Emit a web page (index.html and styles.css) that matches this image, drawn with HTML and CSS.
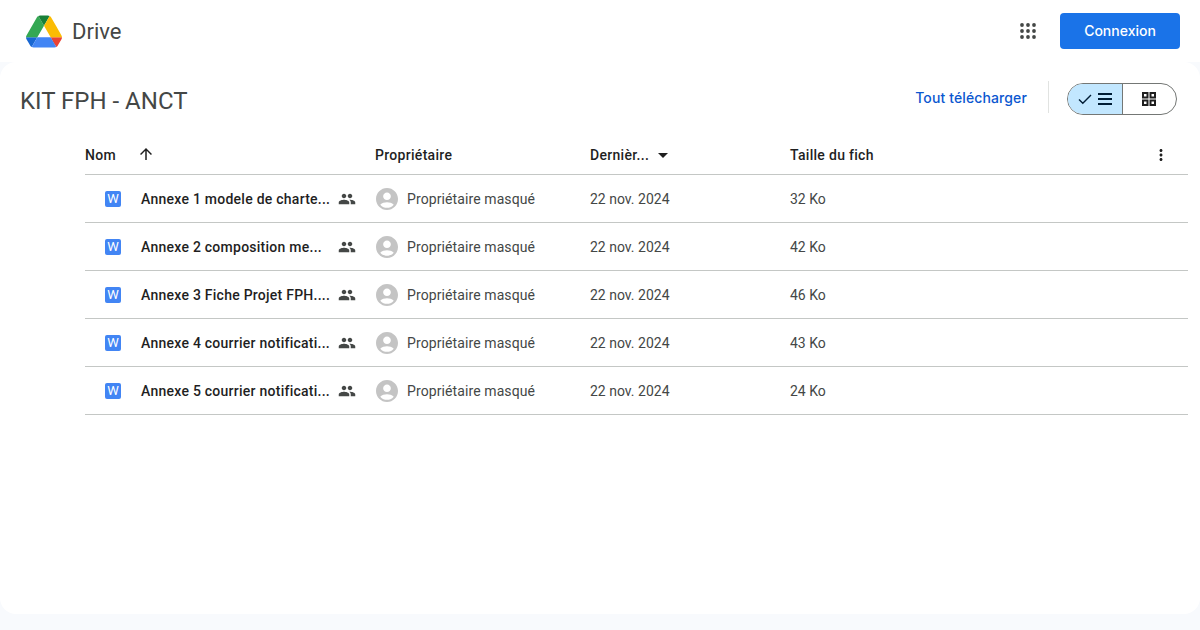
FILE: index.html
```html
<!DOCTYPE html>
<html lang="fr">
<head>
    <meta charset="UTF-8">
    <title>KIT FPH - ANCT - Google Drive</title>
    <link rel="stylesheet" href="styles.css">
</head>
<body>
    <header class="topbar">
        <div class="brand">
            <svg class="drive-logo" viewBox="0 0 87.3 78" aria-hidden="true">
                <path d="m6.6 66.85 3.85 6.65c.8 1.4 1.95 2.5 3.3 3.3l13.75-23.8h-27.5c0 1.55.4 3.1 1.2 4.5z" fill="#1967d2"/>
                <path d="m43.65 25-13.75-23.8c-1.35.8-2.5 1.9-3.3 3.3l-25.4 44a9.06 9.06 0 0 0 -1.2 4.5h27.5z" fill="#34a853"/>
                <path d="m73.55 76.8c1.35-.8 2.5-1.9 3.3-3.3l1.6-2.75 7.65-13.25c.8-1.4 1.2-2.95 1.2-4.5h-27.502l5.852 11.5z" fill="#ea4335"/>
                <path d="m43.65 25 13.75-23.8c-1.35-.8-2.9-1.2-4.5-1.2h-18.5c-1.6 0-3.15.45-4.5 1.2z" fill="#188038"/>
                <path d="m59.8 53h-32.3l-13.75 23.8c1.35.8 2.9 1.2 4.5 1.2h50.8c1.6 0 3.15-.45 4.5-1.2z" fill="#4285f4"/>
                <path d="m73.4 26.5-12.7-22c-.8-1.4-1.95-2.5-3.3-3.3l-13.75 23.8 16.15 28h27.45c0-1.55-.4-3.1-1.2-4.5z" fill="#fbbc04"/>
            </svg>
            <span class="brand-name">Drive</span>
        </div>
        <div class="topbar-actions">
            <svg class="apps-icon" viewBox="0 0 16 16" aria-hidden="true">
                <circle cx="2" cy="2" r="1.9"/><circle cx="8" cy="2" r="1.9"/><circle cx="14" cy="2" r="1.9"/>
                <circle cx="2" cy="8" r="1.9"/><circle cx="8" cy="8" r="1.9"/><circle cx="14" cy="8" r="1.9"/>
                <circle cx="2" cy="14" r="1.9"/><circle cx="8" cy="14" r="1.9"/><circle cx="14" cy="14" r="1.9"/>
            </svg>
            <button class="login">Connexion</button>
        </div>
    </header>

    <main class="card">
        <div class="toolbar">
            <h1>KIT FPH - ANCT</h1>
            <div class="toolbar-actions">
                <a class="download" href="#">Tout télécharger</a>
                <span class="separator"></span>
                <div class="view-toggle">
                    <span class="view-option selected">
                        <svg class="check-icon" viewBox="0 0 14 12" aria-hidden="true"><path d="M1 6.5l3.8 3.8L13 2"/></svg>
                        <svg class="list-icon" viewBox="0 0 14 12" aria-hidden="true"><rect y="0" width="14" height="2"/><rect y="5" width="14" height="2"/><rect y="10" width="14" height="2"/></svg>
                    </span>
                    <span class="view-option">
                        <svg class="grid-icon" viewBox="0 0 14 14" aria-hidden="true"><rect x="1" y="1" width="4.5" height="4.5"/><rect x="8.5" y="1" width="4.5" height="4.5"/><rect x="1" y="8.5" width="4.5" height="4.5"/><rect x="8.5" y="8.5" width="4.5" height="4.5"/></svg>
                    </span>
                </div>
            </div>
        </div>

        <div class="file-table">
            <div class="row head">
                <div class="col-name">
                    <span>Nom</span>
                    <svg class="arrow-icon" viewBox="0 0 24 24" aria-hidden="true"><path d="M4 12l1.41 1.41L11 7.83V20h2V7.83l5.58 5.59L20 12l-8-8-8 8z"/></svg>
                </div>
                <div>Propriétaire</div>
                <div class="col-date">
                    <span>Dernièr...</span>
                    <svg class="caret-icon" viewBox="0 0 24 24" aria-hidden="true"><path d="M7 10l5 5 5-5z"/></svg>
                </div>
                <div class="col-size">
                    <span>Taille du fich</span>
                    <svg class="more-icon" viewBox="0 0 24 24" aria-hidden="true"><path d="M12 8c1.1 0 2-.9 2-2s-.9-2-2-2-2 .9-2 2 .9 2 2 2zm0 2c-1.1 0-2 .9-2 2s.9 2 2 2 2-.9 2-2-.9-2-2-2zm0 6c-1.1 0-2 .9-2 2s.9 2 2 2 2-.9 2-2-.9-2-2-2z"/></svg>
                </div>
            </div>

            <div class="row file">
                <div class="file-name">
                    <span class="word-icon">W</span>
                    <span class="title">Annexe 1 modele de charte...</span>
                    <svg class="people-icon" viewBox="0 0 24 24" aria-hidden="true"><path d="M16 11c1.66 0 2.99-1.34 2.99-3S17.66 5 16 5c-1.66 0-3 1.34-3 3s1.34 3 3 3zm-8 0c1.66 0 2.99-1.34 2.99-3S9.66 5 8 5C6.34 5 5 6.34 5 8s1.34 3 3 3zm0 2c-2.33 0-7 1.17-7 3.5V19h14v-2.5c0-2.33-4.67-3.5-7-3.5zm8 0c-.29 0-.62.02-.97.05 1.16.84 1.97 1.97 1.97 3.45V19h6v-2.5c0-2.33-4.67-3.5-7-3.5z"/></svg>
                </div>
                <div class="owner">
                    <svg class="avatar" viewBox="2 2 20 20" aria-hidden="true"><path d="M12 2C6.48 2 2 6.48 2 12s4.48 10 10 10 10-4.48 10-10S17.52 2 12 2zm0 4c1.93 0 3.5 1.57 3.5 3.5S13.93 13 12 13s-3.5-1.57-3.5-3.5S10.07 6 12 6zm0 14c-2.03 0-4.43-.82-6.14-2.88C7.55 15.8 9.68 15 12 15s4.45.8 6.14 2.12C16.43 19.18 14.03 20 12 20z"/></svg>
                    <span>Propriétaire masqué</span>
                </div>
                <div>22 nov. 2024</div>
                <div>32 Ko</div>
            </div>

            <div class="row file">
                <div class="file-name">
                    <span class="word-icon">W</span>
                    <span class="title">Annexe 2 composition me...</span>
                    <svg class="people-icon" viewBox="0 0 24 24" aria-hidden="true"><path d="M16 11c1.66 0 2.99-1.34 2.99-3S17.66 5 16 5c-1.66 0-3 1.34-3 3s1.34 3 3 3zm-8 0c1.66 0 2.99-1.34 2.99-3S9.66 5 8 5C6.34 5 5 6.34 5 8s1.34 3 3 3zm0 2c-2.33 0-7 1.17-7 3.5V19h14v-2.5c0-2.33-4.67-3.5-7-3.5zm8 0c-.29 0-.62.02-.97.05 1.16.84 1.97 1.97 1.97 3.45V19h6v-2.5c0-2.33-4.67-3.5-7-3.5z"/></svg>
                </div>
                <div class="owner">
                    <svg class="avatar" viewBox="2 2 20 20" aria-hidden="true"><path d="M12 2C6.48 2 2 6.48 2 12s4.48 10 10 10 10-4.48 10-10S17.52 2 12 2zm0 4c1.93 0 3.5 1.57 3.5 3.5S13.93 13 12 13s-3.5-1.57-3.5-3.5S10.07 6 12 6zm0 14c-2.03 0-4.43-.82-6.14-2.88C7.55 15.8 9.68 15 12 15s4.45.8 6.14 2.12C16.43 19.18 14.03 20 12 20z"/></svg>
                    <span>Propriétaire masqué</span>
                </div>
                <div>22 nov. 2024</div>
                <div>42 Ko</div>
            </div>

            <div class="row file">
                <div class="file-name">
                    <span class="word-icon">W</span>
                    <span class="title">Annexe 3 Fiche Projet FPH....</span>
                    <svg class="people-icon" viewBox="0 0 24 24" aria-hidden="true"><path d="M16 11c1.66 0 2.99-1.34 2.99-3S17.66 5 16 5c-1.66 0-3 1.34-3 3s1.34 3 3 3zm-8 0c1.66 0 2.99-1.34 2.99-3S9.66 5 8 5C6.34 5 5 6.34 5 8s1.34 3 3 3zm0 2c-2.33 0-7 1.17-7 3.5V19h14v-2.5c0-2.33-4.67-3.5-7-3.5zm8 0c-.29 0-.62.02-.97.05 1.16.84 1.97 1.97 1.97 3.45V19h6v-2.5c0-2.33-4.67-3.5-7-3.5z"/></svg>
                </div>
                <div class="owner">
                    <svg class="avatar" viewBox="2 2 20 20" aria-hidden="true"><path d="M12 2C6.48 2 2 6.48 2 12s4.48 10 10 10 10-4.48 10-10S17.52 2 12 2zm0 4c1.93 0 3.5 1.57 3.5 3.5S13.93 13 12 13s-3.5-1.57-3.5-3.5S10.07 6 12 6zm0 14c-2.03 0-4.43-.82-6.14-2.88C7.55 15.8 9.68 15 12 15s4.45.8 6.14 2.12C16.43 19.18 14.03 20 12 20z"/></svg>
                    <span>Propriétaire masqué</span>
                </div>
                <div>22 nov. 2024</div>
                <div>46 Ko</div>
            </div>

            <div class="row file">
                <div class="file-name">
                    <span class="word-icon">W</span>
                    <span class="title">Annexe 4 courrier notificati...</span>
                    <svg class="people-icon" viewBox="0 0 24 24" aria-hidden="true"><path d="M16 11c1.66 0 2.99-1.34 2.99-3S17.66 5 16 5c-1.66 0-3 1.34-3 3s1.34 3 3 3zm-8 0c1.66 0 2.99-1.34 2.99-3S9.66 5 8 5C6.34 5 5 6.34 5 8s1.34 3 3 3zm0 2c-2.33 0-7 1.17-7 3.5V19h14v-2.5c0-2.33-4.67-3.5-7-3.5zm8 0c-.29 0-.62.02-.97.05 1.16.84 1.97 1.97 1.97 3.45V19h6v-2.5c0-2.33-4.67-3.5-7-3.5z"/></svg>
                </div>
                <div class="owner">
                    <svg class="avatar" viewBox="2 2 20 20" aria-hidden="true"><path d="M12 2C6.48 2 2 6.48 2 12s4.48 10 10 10 10-4.48 10-10S17.52 2 12 2zm0 4c1.93 0 3.5 1.57 3.5 3.5S13.93 13 12 13s-3.5-1.57-3.5-3.5S10.07 6 12 6zm0 14c-2.03 0-4.43-.82-6.14-2.88C7.55 15.8 9.68 15 12 15s4.45.8 6.14 2.12C16.43 19.18 14.03 20 12 20z"/></svg>
                    <span>Propriétaire masqué</span>
                </div>
                <div>22 nov. 2024</div>
                <div>43 Ko</div>
            </div>

            <div class="row file">
                <div class="file-name">
                    <span class="word-icon">W</span>
                    <span class="title">Annexe 5 courrier notificati...</span>
                    <svg class="people-icon" viewBox="0 0 24 24" aria-hidden="true"><path d="M16 11c1.66 0 2.99-1.34 2.99-3S17.66 5 16 5c-1.66 0-3 1.34-3 3s1.34 3 3 3zm-8 0c1.66 0 2.99-1.34 2.99-3S9.66 5 8 5C6.34 5 5 6.34 5 8s1.34 3 3 3zm0 2c-2.33 0-7 1.17-7 3.5V19h14v-2.5c0-2.33-4.67-3.5-7-3.5zm8 0c-.29 0-.62.02-.97.05 1.16.84 1.97 1.97 1.97 3.45V19h6v-2.5c0-2.33-4.67-3.5-7-3.5z"/></svg>
                </div>
                <div class="owner">
                    <svg class="avatar" viewBox="2 2 20 20" aria-hidden="true"><path d="M12 2C6.48 2 2 6.48 2 12s4.48 10 10 10 10-4.48 10-10S17.52 2 12 2zm0 4c1.93 0 3.5 1.57 3.5 3.5S13.93 13 12 13s-3.5-1.57-3.5-3.5S10.07 6 12 6zm0 14c-2.03 0-4.43-.82-6.14-2.88C7.55 15.8 9.68 15 12 15s4.45.8 6.14 2.12C16.43 19.18 14.03 20 12 20z"/></svg>
                    <span>Propriétaire masqué</span>
                </div>
                <div>22 nov. 2024</div>
                <div>24 Ko</div>
            </div>
        </div>
    </main>
</body>
</html>
```

FILE: styles.css
```css
* {
    box-sizing: border-box;
    margin: 0;
    padding: 0;
}

html, body {
    height: 630px;
    overflow: hidden;
}

body {
    background-color: #f8fafd;
    font-family: 'Roboto', sans-serif;
    color: #1f1f1f;
}

.topbar {
    height: 62px;
    background-color: white;
    display: flex;
    align-items: center;
    justify-content: space-between;
    padding: 0 20px 0 26px;
}

.brand {
    display: flex;
    align-items: center;
    gap: 10px;
}

.drive-logo {
    width: 36px;
    height: 33px;
}

.brand-name {
    font-size: 22px;
    color: #444746;
}

.topbar-actions {
    display: flex;
    align-items: center;
    gap: 24px;
}

.apps-icon {
    width: 16px;
    height: 16px;
    fill: #444746;
}

.login {
    width: 120px;
    height: 36px;
    padding-bottom: 2px;
    background-color: #1a73e8;
    color: white;
    border: none;
    border-radius: 4px;
    font-family: 'Inter', sans-serif;
    font-size: 14px;
    font-weight: 500;
}

.card {
    height: 552px;
    background-color: white;
    border-radius: 16px;
}

.toolbar {
    height: 74px;
    display: flex;
    align-items: center;
    justify-content: space-between;
    padding: 0 23px 0 20px;
}

h1 {
    font-size: 24px;
    font-weight: 400;
    color: #444746;
    margin-top: 3px;
}

.toolbar-actions {
    display: flex;
    align-items: center;
}

.download {
    color: #0b57d0;
    font-family: 'Inter', sans-serif;
    font-size: 14px;
    font-weight: 500;
    letter-spacing: 0.12px;
    text-decoration: none;
    margin-bottom: 3px;
}

.separator {
    width: 1px;
    height: 32px;
    background-color: #e1e3e1;
    margin: 0 18px 4px 21px;
}

.view-toggle {
    display: flex;
    width: 110px;
    height: 32px;
    border: 1px solid #747775;
    border-radius: 16px;
    overflow: hidden;
}

.view-option {
    flex: 1;
    display: flex;
    align-items: center;
    justify-content: center;
}

.view-option.selected {
    flex: none;
    width: 55px;
    gap: 6px;
    background-color: #c2e7ff;
    border-right: 1px solid #747775;
}

.check-icon {
    width: 14px;
    height: 12px;
    fill: none;
    stroke: #001d35;
    stroke-width: 1.4;
}

.list-icon {
    width: 14px;
    height: 12px;
    fill: #001d35;
}

.grid-icon {
    width: 14px;
    height: 14px;
    margin-right: 1px;
    fill: none;
    stroke: #1f1f1f;
    stroke-width: 2;
}

.file-table {
    margin: 0 12px 0 85px;
    font-size: 14px;
}

.row {
    display: grid;
    grid-template-columns: 290px 215px 200px 1fr;
    align-items: center;
    border-bottom: 1px solid #c4c7c5;
}

.row.head {
    height: 39px;
    font-weight: 500;
    letter-spacing: 0.3px;
    color: #1f1f1f;
}

.row.file {
    height: 48px;
    color: #444746;
}

.col-name, .col-date, .col-size {
    display: flex;
    align-items: center;
}

.arrow-icon {
    width: 18px;
    height: 18px;
    margin-left: 21px;
    margin-top: -2px;
    fill: #1f1f1f;
}

.caret-icon {
    width: 24px;
    height: 24px;
    margin-left: 2px;
    fill: #1f1f1f;
}

.col-size {
    justify-content: space-between;
    padding-right: 18px;
}

.more-icon {
    width: 18px;
    height: 18px;
    fill: #1f1f1f;
}

.file-name {
    display: flex;
    align-items: center;
    padding-left: 20px;
}

.word-icon {
    width: 16px;
    height: 16px;
    border-radius: 2px;
    background-color: #4285f4;
    color: white;
    font-size: 13px;
    line-height: 16px;
    text-align: center;
    margin-right: 20px;
}

.title {
    width: 197px;
    font-weight: 500;
    letter-spacing: 0.25px;
    color: #1f1f1f;
    white-space: nowrap;
}

.people-icon {
    width: 18px;
    height: 18px;
    fill: #444746;
}

.owner {
    display: flex;
    align-items: center;
    gap: 9px;
    letter-spacing: 0.1px;
}

.avatar {
    width: 22px;
    height: 22px;
    margin-left: 1px;
    fill: #c4c4c4;
}
```
